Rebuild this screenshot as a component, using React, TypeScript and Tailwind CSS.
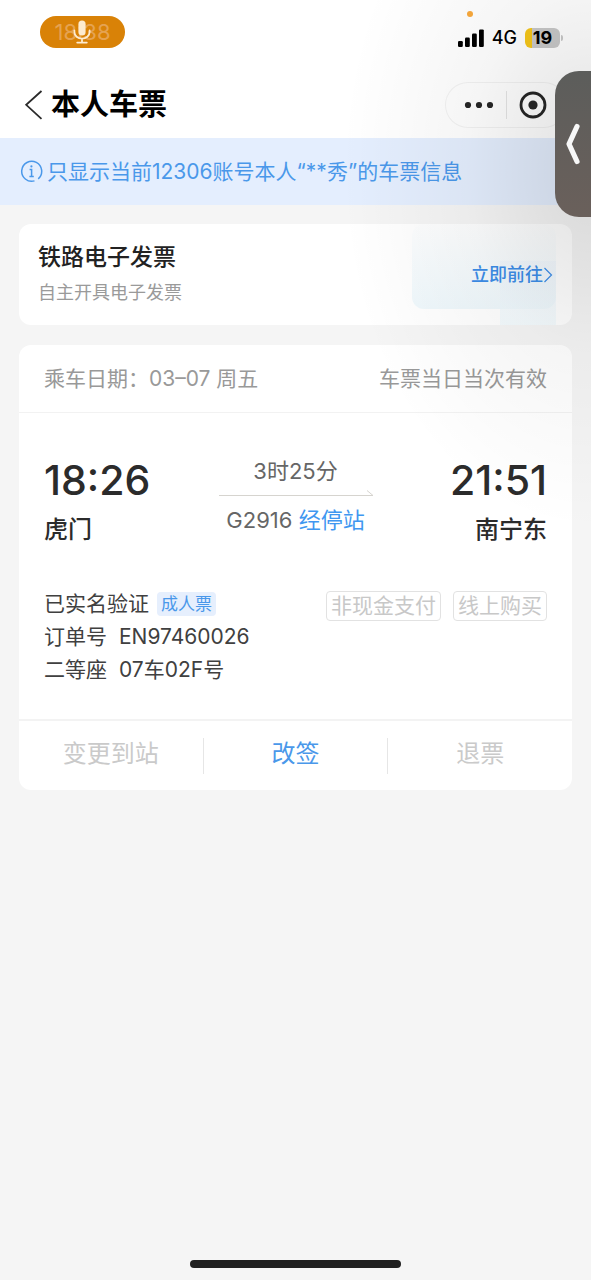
import React from "react";

const SANS = "font-['Inter','Noto_Sans_CJK_SC',sans-serif]";

function StatusBar() {
  return (
    <div className="relative flex h-18 items-start justify-between pl-10 pr-7">
      <div className="relative mt-4 flex h-8 w-[85px] items-center justify-center rounded-full bg-[#d98207]">
        <span className="text-[22px] text-[#e5a352]">18:38</span>
        <svg
          className="absolute left-8 top-1"
          width="20"
          height="24"
          viewBox="0 0 20 24"
          fill="none"
          stroke="#fdebd0"
          strokeWidth="1.8"
          strokeLinecap="round"
        >
          <rect x="6.4" y="0.6" width="7.2" height="15" rx="3.6" fill="#fdebd0" stroke="none" />
          <path d="M2.4 10.5v1.6a7.6 6.6 0 0 0 15.2 0v-1.6M10 18.8v3.6M5.2 22.6h9.6" />
        </svg>
      </div>
      <div className="mt-6 flex h-7 items-center gap-2">
        <svg width="27" height="18" viewBox="0 0 27 18" fill="#000">
          <rect x="1" y="12" width="4.8" height="6" rx="1.2" />
          <rect x="8" y="8.5" width="4.8" height="9.5" rx="1.2" />
          <rect x="15" y="4.5" width="4.8" height="13.5" rx="1.2" />
          <rect x="22" y="0.4" width="4.8" height="17.6" rx="1.2" />
        </svg>
        <span className="text-lg font-medium text-black">4G</span>
        <div className="flex items-center gap-px">
          <div className="flex h-5 w-[35px] items-center justify-center rounded-md bg-linear-to-r from-[#f5c61a] from-20% to-[#c8c8c8] to-20% text-lg font-bold text-black">
            19
          </div>
          <div className="h-1.5 w-0.5 rounded-r-full bg-[#c8c8c8]" />
        </div>
      </div>
      <div className="absolute right-[118px] top-[11px] size-1.5 rounded-full bg-[#f9a93c]" />
    </div>
  );
}

function NavBar() {
  return (
    <header className="flex h-[66px] items-center justify-between pl-6">
      <div className="flex items-center gap-2">
        <button type="button" aria-label="返回">
          <svg width="19" height="30" viewBox="0 0 19 30" fill="none" stroke="#2b2b2b" strokeWidth="1.8">
            <path d="M17.5 1 2.2 14.8l15.3 14" />
          </svg>
        </button>
        <h1 className="text-[29px] leading-9 font-bold text-black">本人车票</h1>
      </div>
      <div className="mr-6 flex h-[46px] w-[122px] items-center rounded-full border border-black/5 bg-white/40">
        <button type="button" aria-label="更多" className="flex flex-1 justify-center pl-1.5">
          <svg width="30" height="8" viewBox="0 0 30 8" fill="#262626">
            <circle cx="4" cy="4" r="3.1" />
            <circle cx="15" cy="4" r="3.1" />
            <circle cx="26" cy="4" r="3.1" />
          </svg>
        </button>
        <div className="h-7 w-px bg-black/10" />
        <button type="button" aria-label="关闭" className="flex flex-1 justify-center pr-1.5">
          <svg width="28" height="28" viewBox="0 0 28 28" fill="none" stroke="#262626" strokeWidth="2.8">
            <circle cx="14" cy="14" r="12" />
            <circle cx="14" cy="14" r="4.6" fill="#262626" stroke="none" />
          </svg>
        </button>
      </div>
    </header>
  );
}

function Notice() {
  return (
    <div className="flex h-[67px] items-center gap-1 bg-[#e4eefe] px-5 text-[21px] text-[#4a98ea]">
      <svg width="23" height="23" viewBox="0 0 23 23" fill="none" stroke="currentColor" strokeWidth="1.5">
        <path d="M14.5 20.9A10 10 0 1 1 18.2 18.9" />
        <path d="M9.6 9.6h2v6.8M9.4 16.4h4.4" />
        <circle cx="11.4" cy="6.4" r="1.1" fill="currentColor" stroke="none" />
      </svg>
      <p className="whitespace-nowrap">只显示当前12306账号本人“**秀”的车票信息</p>
    </div>
  );
}

function InvoiceCard() {
  return (
    <section className="relative flex h-[101px] items-center justify-between overflow-hidden rounded-xl bg-white px-[19px]">
      <div className="absolute right-4 top-0 h-[85px] w-36 rounded-xl bg-linear-to-b from-[#f8fbfd]/20 to-[#eff8fc]" />
      <div className="absolute right-4 bottom-0 h-16 w-14 bg-linear-to-b from-[#ecf3fd]/40 to-[#eff9fd]/70" />
      <div>
        <h2 className="text-[23px] leading-8 font-medium text-[#222]">铁路电子发票</h2>
        <p className="mt-1 text-lg leading-8 text-[#9a9a9a]">自主开具电子发票</p>
      </div>
      <a href="#invoice" className="relative flex items-center text-lg font-medium text-[#3c8de8]">
        立即前往
        <svg width="10" height="16" viewBox="0 0 10 16" fill="none" stroke="currentColor" strokeWidth="1.2">
          <path d="m1.5 1 7 7-7 7" />
        </svg>
      </a>
    </section>
  );
}

function Station({ time, name, className }: { time: string; name: string; className?: string }) {
  return (
    <div className={className}>
      <div className="text-[41px] leading-[50px] font-medium text-[#2b2b2b]">{time}</div>
      <div className="mt-1 text-2xl leading-[42px] font-medium text-[#2b2b2b]">{name}</div>
    </div>
  );
}

function TicketCard() {
  return (
    <section className="mt-5 rounded-xl bg-white">
      <div className="flex h-[68px] items-center justify-between border-b border-[#f2f2f2] px-[25px] text-[21px] text-[#999]">
        <span>乘车日期：03–07 周五</span>
        <span>车票当日当次有效</span>
      </div>

      <div className="flex h-[306px] flex-col px-[25px] pt-[42px]">
        <div className="grid grid-cols-[1fr_154px_1fr]">
          <Station time="18:26" name="虎门" />
          <div className="text-center whitespace-nowrap text-[22px] leading-8 text-[#666]">
            <div>3时25分</div>
            <svg className="mt-px w-full" height="8" viewBox="0 0 154 8" fill="none" stroke="#d6d4cf">
              <path d="M0 7.5h154l-6-5" />
            </svg>
            <div className="mt-2">
              G2916{" "}
              <a href="#stops" className="text-[#3f97f0]">
                经停站
              </a>
            </div>
          </div>
          <Station time="21:51" name="南宁东" className="text-right" />
        </div>

        <div className="mt-9 flex items-start justify-between text-[21px] leading-[33px] text-[#404040]">
          <div>
            <div className="flex items-center gap-2">
              已实名验证
              <span className="rounded-sm bg-[#e6effd] px-1 text-[17px] leading-6 text-[#4a98ea]">成人票</span>
            </div>
            <div className="flex gap-3">
              <span>订单号</span>
              <span>EN97460026</span>
            </div>
            <div className="flex gap-3">
              <span>二等座</span>
              <span>07车02F号</span>
            </div>
          </div>
          <div className="mt-1 flex gap-3 leading-7 text-[#c8c8c8]">
            <span className="rounded-sm border border-[#e2e2e2] px-1">非现金支付</span>
            <span className="rounded-sm border border-[#e2e2e2] px-1">线上购买</span>
          </div>
        </div>
      </div>

      <div className="flex h-[71px] items-center border-t-2 border-[#f3f3f3] text-2xl">
        <button type="button" className="flex-1 pb-1 text-[#cacaca]">
          变更到站
        </button>
        <div className="h-9 w-px bg-[#e6e6e6]" />
        <button type="button" className="flex-1 pb-1 text-[#4a98ea]">
          改签
        </button>
        <div className="h-9 w-px bg-[#e6e6e6]" />
        <button type="button" className="flex-1 pb-1 text-[#cacaca]">
          退票
        </button>
      </div>
    </section>
  );
}

export default function App() {
  return (
    <div className={`relative flex min-h-screen flex-col overflow-hidden bg-[#f5f5f5] ${SANS}`}>
      <div className="bg-white">
        <StatusBar />
        <NavBar />
      </div>
      <Notice />
      <main className="flex-1 px-[19px] pt-[19px]">
        <InvoiceCard />
        <TicketCard />
      </main>
      <div className="mx-auto mb-3 h-2 w-[211px] rounded-full bg-[#202020]" />

      {/* soft shade cast by the side drawer */}
      <div className="pointer-events-none absolute inset-x-0 top-0 h-[560px] bg-[radial-gradient(ellipse_250px_360px_at_100%_170px,rgba(0,0,0,0.12),rgba(0,0,0,0.04)_50%,transparent)]" />
      <button
        type="button"
        aria-label="展开"
        className="absolute right-0 top-[71px] flex h-[146px] w-9 items-center justify-center rounded-l-3xl bg-linear-to-b from-[#5c5d5b] to-[#6a605b]"
      >
        <svg width="18" height="44" viewBox="0 0 18 44" fill="none" stroke="#f7f7f7" strokeWidth="5.2" strokeLinecap="round" strokeLinejoin="round">
          <path d="M13 4.5 5 22l8 17.5" />
        </svg>
      </button>
    </div>
  );
}
